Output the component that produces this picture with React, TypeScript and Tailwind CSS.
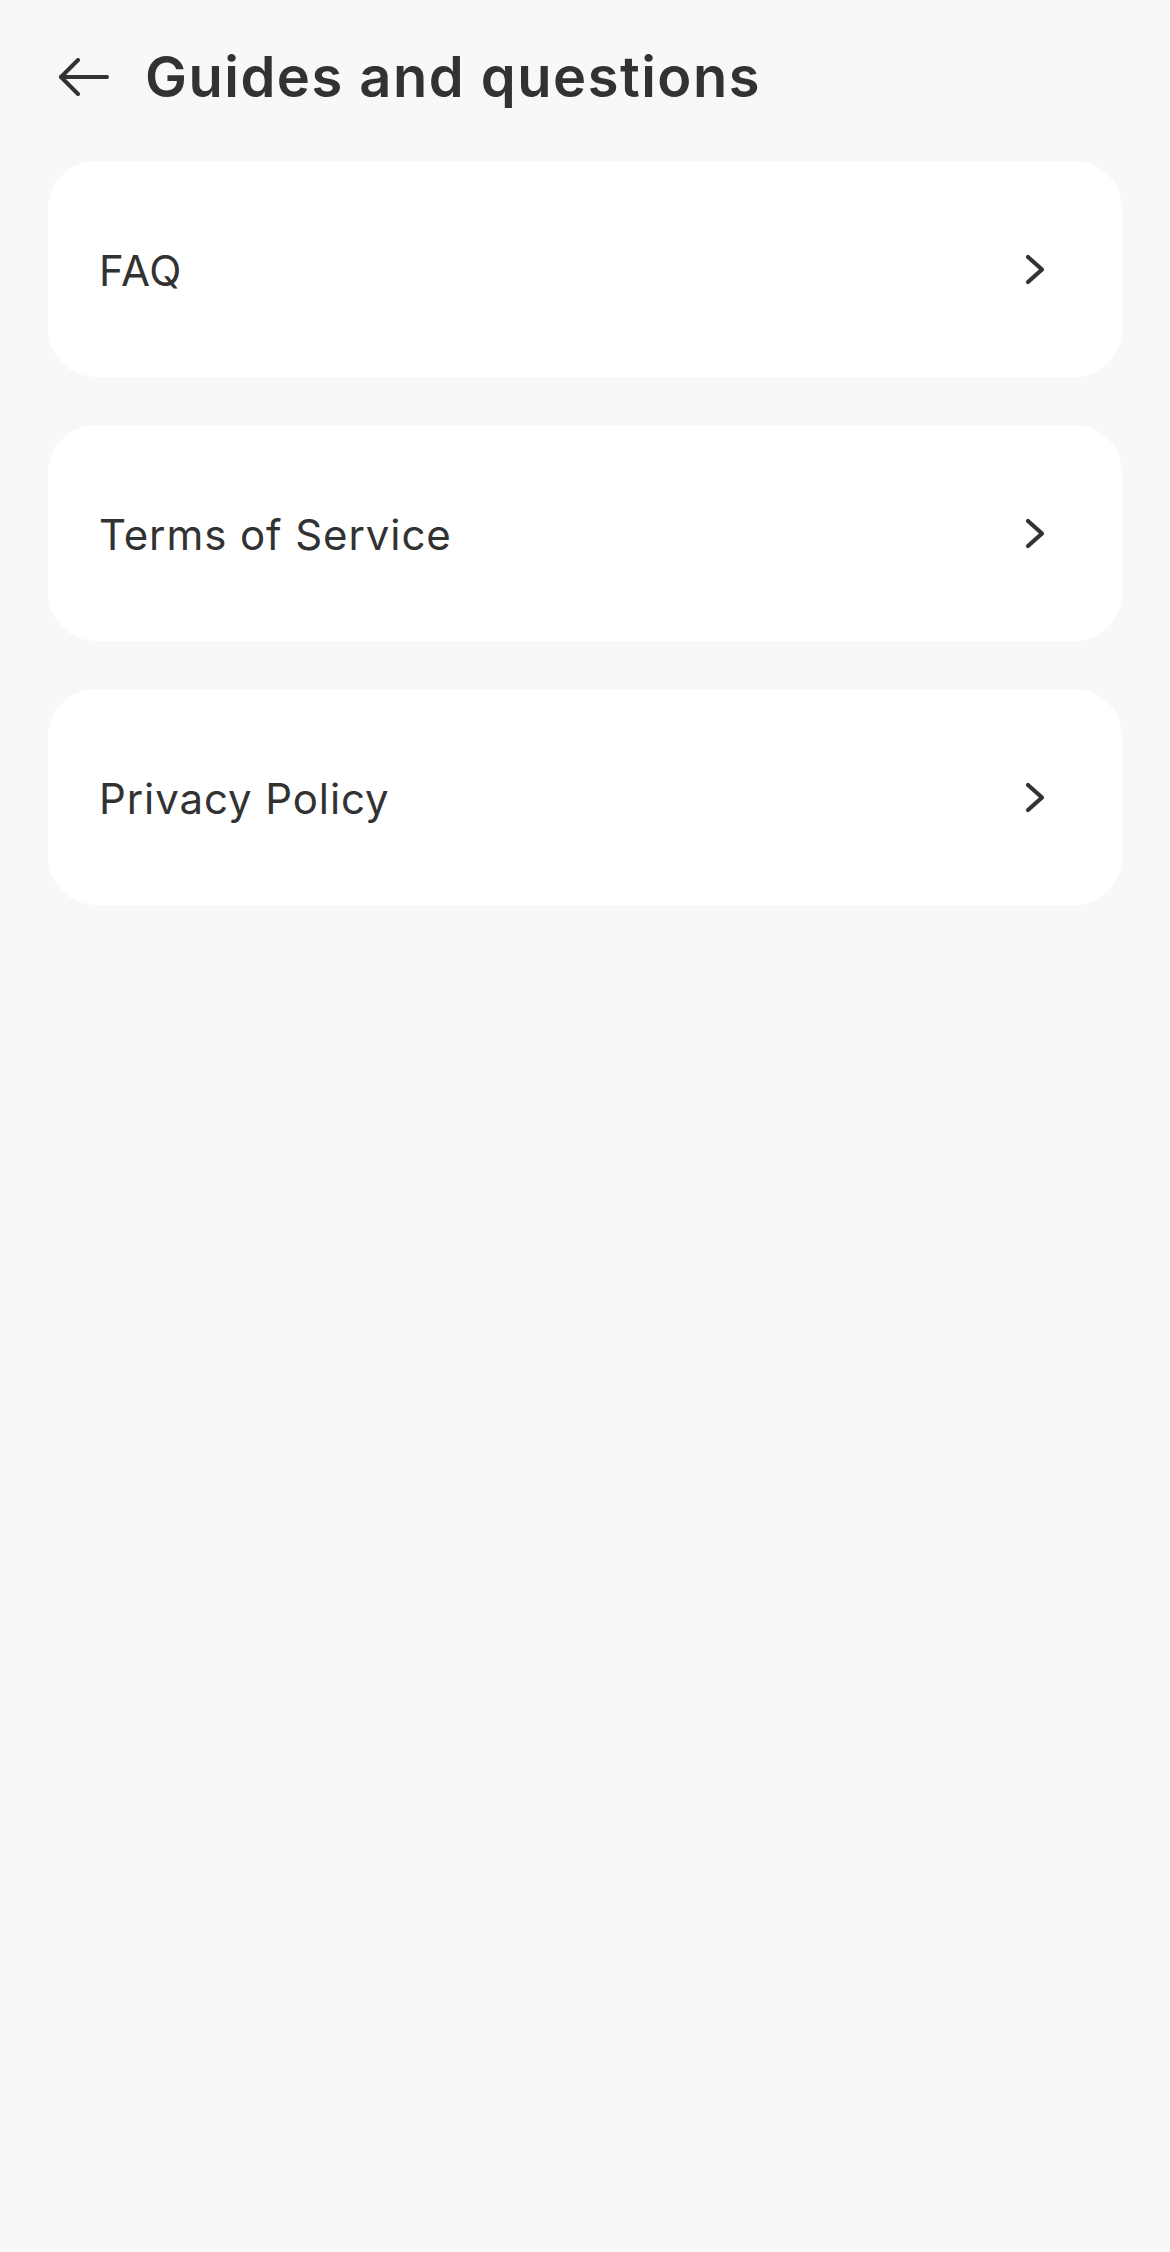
const items = ['FAQ', 'Terms of Service', 'Privacy Policy']

function BackArrow() {
  return (
    <svg width="51" height="38" viewBox="0 0 51 38" fill="none" stroke="#333333" strokeWidth="4" strokeLinecap="round" strokeLinejoin="round">
      <path d="M49 19H3" />
      <path d="M20 2L3 19L20 36" />
    </svg>
  )
}

function Chevron() {
  return (
    <svg width="20" height="31" viewBox="0 0 20 31" fill="none" stroke="#333333" strokeWidth="4.2" strokeLinecap="round" strokeLinejoin="round">
      <path d="M3 3L17 15.5L3 28" />
    </svg>
  )
}

export default function App() {
  return (
    <div className="min-h-[2252px] w-full bg-[#f8f8f8] font-['Inter',sans-serif] text-[#323232]">
      <header className="flex h-[154px] items-center pl-[58px]">
        <button className="flex items-center">
          <BackArrow />
        </button>
        <h1 className="ml-[36px] text-[56px] font-semibold leading-none tracking-[1.5px]">Guides and questions</h1>
      </header>

      <div className="flex flex-col gap-[48px] px-[48px] pt-[7px]">
        {items.map((item) => (
          <div key={item} className="flex h-[216px] items-center justify-between rounded-[48px] bg-white pl-[51px] pr-[77px]">
            <span className="pt-[3px] text-[42px] font-normal leading-none tracking-[0.9px]">{item}</span>
            <Chevron />
          </div>
        ))}
      </div>
    </div>
  )
}
